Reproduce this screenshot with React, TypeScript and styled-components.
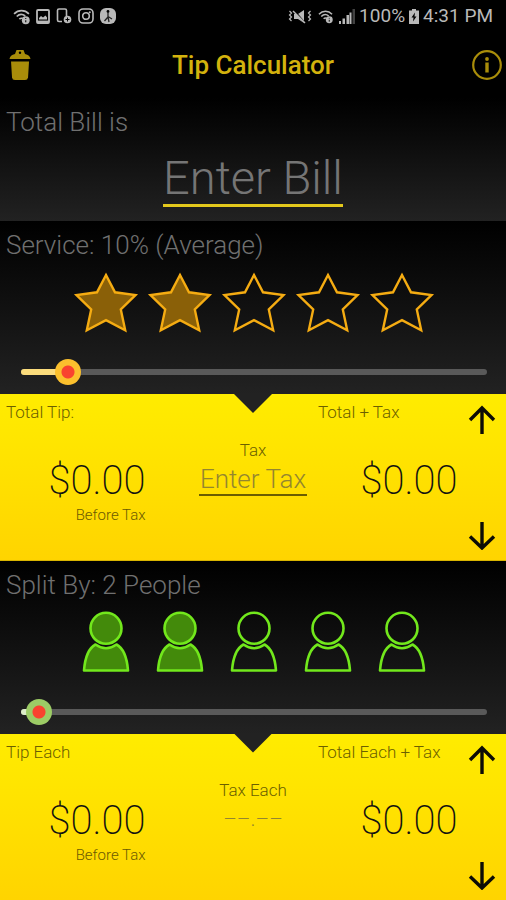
import React, { useState } from "react";
import styled, { createGlobalStyle } from "styled-components";

const GlobalStyle = createGlobalStyle`
  * { box-sizing: border-box; }
  body {
    margin: 0;
    background: #000;
    font-family: Roboto, "Liberation Sans", sans-serif;
    font-weight: 300;
  }
  button { padding: 0; border: 0; background: none; color: inherit; font: inherit; cursor: pointer; }
  svg { display: block; }
`;

const Screen = styled.main`
  display: flex;
  flex-direction: column;
  min-height: 100vh;
  background: #000;
`;

const StatusBar = styled.div`
  display: flex;
  align-items: center;
  justify-content: space-between;
  height: 32px;
  padding: 0 13px 0 13px;
  color: #b9b9b9;
  font-size: 19px;
  font-weight: 400;
  line-height: 32px;
`;

const StatusGroup = styled.div<{ $gap: number }>`
  display: flex;
  align-items: center;
  gap: ${(p) => p.$gap}px;
`;

const Header = styled.header`
  display: grid;
  grid-template-columns: 35px 1fr 40px;
  align-items: center;
  height: 66px;
  padding: 0 3px 0 8px;
  color: #a98d0a;
`;

const Title = styled.h1`
  margin: 0;
  color: #d3b20d;
  font-size: 26px;
  font-weight: 500;
  line-height: 32px;
  text-align: center;
`;

const IconButton = styled.button<{ $end?: boolean }>`
  justify-self: ${(p) => (p.$end ? "end" : "start")};
`;

const DarkSection = styled.section`
  display: flex;
  flex-direction: column;
  background: linear-gradient(#000, #0a0a0a 30%, #222);
`;

const Heading = styled.label`
  padding: 8px 6px 0;
  color: #707070;
  font-size: 26px;
  line-height: 32px;
`;

const BillInput = styled.input`
  align-self: center;
  width: 180px;
  height: 57px;
  margin: 12px 0 14px;
  padding: 0;
  border: 0;
  border-bottom: 3px solid #e3c81c;
  background: none;
  color: #fff;
  font: inherit;
  font-size: 47px;
  line-height: 52px;
  text-align: center;
  outline: none;
  &::placeholder { color: #757575; opacity: 1; }
`;

const IconRow = styled.div`
  display: flex;
  justify-content: center;
  padding: 10px 0 0 2px;
`;

const RateButton = styled.button`
  display: flex;
  justify-content: center;
  width: 74px;
`;

const SliderBox = styled.div`
  display: grid;
  align-items: center;
  margin: 26px 6px 9px 8px;
  & > * { grid-area: 1 / 1; }
`;

const Track = styled.div`
  height: 6px;
  margin: 0 13px;
  border-radius: 3px;
  background: #595959;
`;

const Fill = styled.div<{ $color: string }>`
  height: 6px;
  border-radius: 3px;
  background: ${(p) => p.$color};
`;

const Range = styled.input<{ $color: string }>`
  appearance: none;
  width: 100%;
  height: 26px;
  margin: 0;
  background: none;
  outline: none;
  &::-webkit-slider-thumb {
    appearance: none;
    width: 26px;
    height: 26px;
    border-radius: 50%;
    background: radial-gradient(circle, #f9432f 6px, ${(p) => p.$color} 7px);
  }
`;

const Panel = styled.section`
  position: relative;
  display: grid;
  flex: 1 0 auto;
  grid-template-columns: 1.4fr 1fr 1.4fr;
  padding: 0 6px 9px;
  border-bottom: 1px solid #d8b400;
  background: linear-gradient(#ffec00, #ffe400 35%, #ffd400);
  color: #111;
  &:last-child { border-bottom-color: #ffd400; }
  &::before {
    content: "";
    position: absolute;
    top: 0;
    left: calc(50% - 19px);
    width: 38px;
    height: 19px;
    background: #222;
    clip-path: polygon(0 0, 100% 0, 50% 100%);
  }
`;

const Column = styled.div`
  display: flex;
  flex-direction: column;
  align-items: center;
  min-width: 0;
`;

const PanelHead = styled.div`
  display: flex;
  justify-content: space-between;
  align-self: stretch;
  height: 40px;
  color: #6b5f00;
  font-size: 17px;
  line-height: 36px;
  white-space: nowrap;
`;

const ArrowButton = styled.button<{ $down?: boolean }>`
  align-self: flex-end;
  margin: ${(p) => (p.$down ? "17px 4px 0 0" : "0 4px 0 0")};
  color: #0d0c06;
`;

const Figure = styled.div`
  display: flex;
  flex-direction: column;
  align-items: flex-end;
  margin-top: 23px;
`;

const Amount = styled.output`
  font-size: 40px;
  font-weight: 200;
  line-height: 48px;
`;

const Caption = styled.span`
  color: #6b5a00;
  font-size: 15px;
  line-height: 20px;
`;

const TaxLabel = styled.label`
  margin-top: 44px;
  color: #6b5f00;
  font-size: 17px;
  line-height: 24px;
`;

const TaxInput = styled.input`
  width: 108px;
  height: 34px;
  padding: 2px 0 0;
  border: 0;
  border-bottom: 2px solid #6b5d00;
  background: none;
  color: #222;
  font: inherit;
  font-size: 26px;
  line-height: 30px;
  text-align: center;
  outline: none;
  &::placeholder { color: #94862f; opacity: 1; }
`;

const TaxValue = styled.output`
  color: #94862f;
  font-size: 21px;
  line-height: 34px;
`;

const WifiInfo = ({ size }: { size: number }) => (
  <svg width={size} height={size} viewBox="0 0 16 16" fill="none" stroke="currentColor" strokeWidth="1.6">
    <path d="M1 5.5C5 1.5 11 1.5 15 5.5M3.5 8C6 5.5 9 5.5 11.5 7.5M6 10.5c1-1 2-1 3-.7" />
    <circle cx="12" cy="11.5" r="3.7" fill="currentColor" stroke="none" />
    <path d="M12 9.5v.8M12 11.5v2" stroke="#000" strokeWidth="1" />
  </svg>
);

const PictureIcon = () => (
  <svg width="14" height="15" viewBox="0 0 14 15" fill="none" stroke="currentColor" strokeWidth="1.8">
    <rect x="1" y="1" width="12" height="13" rx="1" />
    <path d="M3 10.5V9l2-2 2 1.5L9.500 6.500 11 8.500v2Z" fill="currentColor" stroke="none" />
    <path d="M1 12.500h12" />
  </svg>
);

const DeviceIcon = () => (
  <svg width="16" height="16" viewBox="0 0 16 16" fill="none" stroke="currentColor" strokeWidth="1.6">
    <path d="M6 13.500H3q-1.500 0-1.500-1.500V2.500Q1.500 1 3 1h6q1.500 0 1.500 1.500V8" />
    <circle cx="11.500" cy="11.500" r="3.800" fill="currentColor" stroke="none" />
    <path d="M11.500 9.500v4M9.500 11.500h4" stroke="#000" strokeWidth="1" />
  </svg>
);

const CameraIcon = () => (
  <svg width="16" height="16" viewBox="0 0 16 16" fill="none" stroke="currentColor" strokeWidth="1.600">
    <rect x="1" y="1" width="14" height="14" rx="4" />
    <circle cx="8" cy="8" r="3.300" />
    <circle cx="11.800" cy="4.200" r="1" fill="currentColor" stroke="none" />
  </svg>
);

const RunnerIcon = () => (
  <svg width="16" height="16" viewBox="0 0 16 16">
    <rect width="16" height="16" rx="6" fill="currentColor" />
    <circle cx="8" cy="3.500" r="1.400" fill="#000" />
    <path d="M8 4v5l-3.500 4M8 8.500l4 2.500M8 9l1 5" stroke="#222" strokeWidth="1.300" fill="none" />
  </svg>
);

const MuteIcon = () => (
  <svg width="24" height="15" viewBox="0 0 24 15" fill="none" stroke="currentColor">
    <path d="M1.500 2l2 2-2 2 2 2-2 2 2 2M22.500 2l-2 2 2 2-2 2 2 2-2 2" strokeWidth="1.200" />
    <path d="M6 5h4l6-4v13l-6-4H6Z" fill="currentColor" stroke="none" />
    <path d="M6 1l11 13" stroke="#000" strokeWidth="1.200" />
    <path d="M5 2l12 12" strokeWidth="1.400" />
  </svg>
);

const SignalIcon = () => (
  <svg width="16" height="15" viewBox="0 0 16 15" fill="currentColor">
    <path d="M0 12h2v3H0zM3.500 9.500h2.500V15H3.500zM7.500 6H10v9H7.500z" />
    <path d="M10.500 3.500h2V15h-2z" />
    <path d="M13.500 0H16v15h-2.500z" opacity=".35" />
  </svg>
);

const BatteryIcon = () => (
  <svg width="10" height="15" viewBox="0 0 10 15">
    <path d="M3 0h4v1.500h3V15H0V1.500h3z" fill="currentColor" />
    <path d="M6 3.500L2.500 8.500h2L4 12.500l3.500-5h-2z" fill="#000" />
  </svg>
);

const TrashIcon = () => (
  <svg width="24" height="32" viewBox="0 0 24 32" fill="currentColor">
    <path d="M8.500 1h7l1.500 4q5 1 5.500 5h-21q.5-4 5.500-5z" />
    <circle cx="12" cy="3.800" r="1.200" fill="#000" />
    <path d="M3 12.500h18l-1 16q-.3 2.500-3 2.500H7q-2.700 0-3-2.500z" />
  </svg>
);

const InfoIcon = () => (
  <svg width="32" height="32" viewBox="0 0 32 32" fill="none" stroke="currentColor">
    <circle cx="16" cy="16" r="13.800" strokeWidth="2.200" />
    <path d="M16 13.500v10" strokeWidth="3.400" />
    <circle cx="16" cy="10" r="1.900" fill="currentColor" stroke="none" />
  </svg>
);

const StarIcon = ({ on }: { on: boolean }) => (
  <svg width="66" height="62" viewBox="0 0 66 62" strokeWidth="2.400" stroke="#f5ac12" fill={on ? "#8a6008" : "none"}>
    <path d="M33 4L42 21.300L62.500 24L47.800 38.500L52.200 59.200L33 49.200L13.800 59.200L18.200 38.500L3.500 24L24 21.300Z" />
  </svg>
);

const PersonIcon = ({ on }: { on: boolean }) => (
  <svg width="50" height="62" viewBox="0 0 50 62" strokeWidth="2.600" stroke="#72e81c" fill={on ? "#438a0b" : "none"}>
    <circle cx="25" cy="17.300" r="15.500" />
    <path d="M14.500 33.500Q25 41 35.500 33.500C42 37 46 47 47 59.500H3C4 47 8 37 14.500 33.500Z" strokeLinejoin="round" />
  </svg>
);

const ArrowIcon = ({ down }: { down?: boolean }) => (
  <svg width="28" height={down ? 28 : 40} viewBox={down ? "0 0 28 28" : "0 -12 28 40"} fill="none" stroke="currentColor" strokeWidth="3.400">
    <path
      d={down ? "M14 0v26.500M2 14.500L14 26L26 14.500" : "M14 28V1.500M2 14L14 2L26 14"}
    />
  </svg>
);

type SliderProps = {
  id: string; min: number; max: number; value: number;
  thumb: string; fill: string; onChange: (v: number) => void;
};

const Slider = ({ id, min, max, value, thumb, fill, onChange }: SliderProps) => (
  <SliderBox>
    <Track>
      <Fill $color={fill} style={{ width: `${((value - min) / (max - min)) * 100}%` }} />
    </Track>
    <Range id={id} type="range" min={min} max={max} value={value} $color={thumb}
      onChange={(e) => onChange(Number(e.target.value))} />
  </SliderBox>
);

type PanelProps = {
  name: string; tipLabel: string; totalLabel: string; tip: string; total: string; children: React.ReactNode;
};

const ResultPanel = ({ name, tipLabel, totalLabel, tip, total, children }: PanelProps) => (
  <Panel aria-label={name}>
    <Column>
      <PanelHead>{tipLabel}</PanelHead>
      <Figure>
        <Amount>{tip}</Amount>
        <Caption>Before Tax</Caption>
      </Figure>
    </Column>
    <Column>{children}</Column>
    <Column>
      <PanelHead>
        {totalLabel}
        <ArrowButton aria-label="Round up"><ArrowIcon /></ArrowButton>
      </PanelHead>
      <Figure>
        <Amount>{total}</Amount>
      </Figure>
      <ArrowButton $down aria-label="Round down"><ArrowIcon down /></ArrowButton>
    </Column>
  </Panel>
);

const ratingNames = ["Poor", "Average", "Good", "Great", "Excellent"];
const steps = [1, 2, 3, 4, 5];
const money = (n: number) => `$${n.toFixed(2)}`;

export default function App() {
  const [bill, setBill] = useState("");
  const [tax, setTax] = useState("");
  const [percent, setPercent] = useState(10);
  const [people, setPeople] = useState(2);

  const billValue = Number(bill) || 0;
  const taxValue = Number(tax) || 0;
  const tip = (billValue * percent) / 100;
  const total = billValue + tip + taxValue;
  const stars = Math.max(1, Math.min(5, Math.floor(percent / 5)));

  return (
    <>
      <GlobalStyle />
      <Screen>
        <StatusBar>
          <StatusGroup $gap={6}>
            <WifiInfo size={17} />
            <PictureIcon />
            <DeviceIcon />
            <CameraIcon />
            <RunnerIcon />
          </StatusGroup>
          <StatusGroup $gap={4}>
            <StatusGroup $gap={6}>
              <MuteIcon />
              <WifiInfo size={15} />
              <SignalIcon />
            </StatusGroup>
            <span>100%</span>
            <BatteryIcon />
            <span>4:31 PM</span>
          </StatusGroup>
        </StatusBar>
        <Header>
          <IconButton aria-label="Clear" onClick={() => { setBill(""); setTax(""); }}><TrashIcon /></IconButton>
          <Title>Tip Calculator</Title>
          <IconButton $end aria-label="Information"><InfoIcon /></IconButton>
        </Header>
        <DarkSection>
          <Heading htmlFor="bill">Total Bill is</Heading>
          <BillInput id="bill" inputMode="decimal" placeholder="Enter Bill" value={bill}
            onChange={(e) => setBill(e.target.value)} />
        </DarkSection>
        <DarkSection>
          <Heading htmlFor="service">Service: {percent}% ({ratingNames[stars - 1]})</Heading>
          <IconRow>
            {steps.map((n) => (
              <RateButton key={n} aria-label={`${n} stars`} onClick={() => setPercent(n * 5)}>
                <StarIcon on={n <= stars} />
              </RateButton>
            ))}
          </IconRow>
          <Slider id="service" min={0} max={100} value={percent} thumb="#fbc02d" fill="#fbdc7c" onChange={setPercent} />
        </DarkSection>
        <ResultPanel name="Totals" tipLabel="Total Tip:" totalLabel="Total + Tax" tip={money(tip)} total={money(total)}>
          <TaxLabel htmlFor="tax">Tax</TaxLabel>
          <TaxInput id="tax" inputMode="decimal" placeholder="Enter Tax" value={tax}
            onChange={(e) => setTax(e.target.value)} />
        </ResultPanel>
        <DarkSection>
          <Heading htmlFor="people">Split By: {people} People</Heading>
          <IconRow>
            {steps.map((n) => (
              <RateButton key={n} aria-label={`${n} people`} onClick={() => setPeople(n)}>
                <PersonIcon on={n <= people} />
              </RateButton>
            ))}
          </IconRow>
          <Slider id="people" min={1} max={27} value={people} thumb="#9ccc65" fill="#dcedc8" onChange={setPeople} />
        </DarkSection>
        <ResultPanel name="Each" tipLabel="Tip Each" totalLabel="Total Each + Tax"
          tip={money(tip / people)} total={money(total / people)}>
          <TaxLabel htmlFor="tax-each">Tax Each</TaxLabel>
          <TaxValue id="tax-each">{tax ? money(taxValue / people) : "––.––"}</TaxValue>
        </ResultPanel>
      </Screen>
    </>
  );
}
